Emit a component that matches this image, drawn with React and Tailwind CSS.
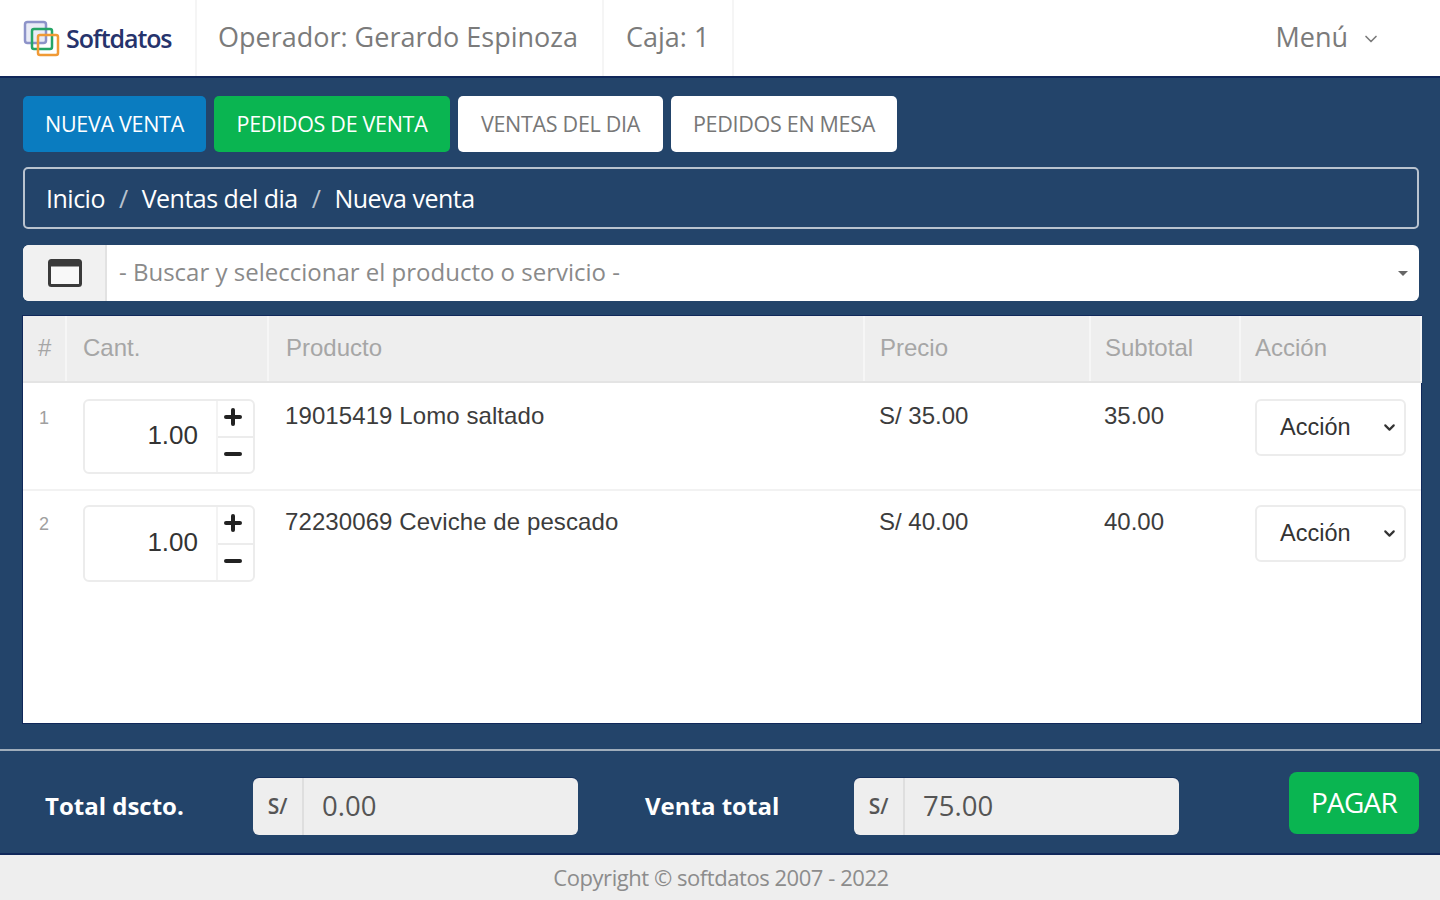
import React from "react";
import { ChevronDown, Plus, Minus } from "lucide-react";

const open = "font-['Open_Sans',sans-serif]";
const arial = "font-['Liberation_Sans',Arial,sans-serif]";

function Logo() {
  return (
    <svg width="38" height="38" viewBox="0 0 38 38" fill="none" className="shrink-0">
      <rect x="2" y="2" width="21" height="21" rx="2.5" stroke="#8d93c9" strokeWidth="2.5" fill="#e9ebf6" />
      <rect x="9" y="9" width="20" height="20" rx="2" stroke="#25a566" strokeWidth="2.5" />
      <rect x="15" y="15" width="20" height="20" rx="2" stroke="#f09a35" strokeWidth="2.5" />
    </svg>
  );
}

function WindowIcon() {
  return (
    <svg width="34" height="28" viewBox="0 0 34 28">
      <rect x="1.5" y="1.5" width="31" height="25" rx="2" fill="#f8f8f8" stroke="#3a3a3a" strokeWidth="3" />
      <rect x="1.5" y="1.5" width="31" height="6" fill="#3a3a3a" />
    </svg>
  );
}

function Tab({ children, className }) {
  return (
    <button className={`h-[56px] rounded-[5px] text-[21.5px] tracking-[-0.3px] flex items-center justify-center ${open} ${className}`}>
      {children}
    </button>
  );
}

function Th({ children, className = "" }) {
  return (
    <th className={`h-[66px] pb-[1px] bg-[#eeeeee] border-b-2 border-r-2 border-[#e4e4e4] border-r-[#f6f6f6] text-left align-middle font-normal text-[24px] text-[#a6a6a6] ${className}`}>
      {children}
    </th>
  );
}

function Stepper({ className = "" }) {
  return (
    <div className={`w-[172px] rounded-[6px] border-2 border-[#ececec] flex ${className}`}>
      <div className="flex-1 flex items-center justify-end pr-[18px] pb-[2px] text-[26px] text-[#333333]">1.00</div>
      <div className="w-[37px] border-l-2 border-[#f3f3f3] flex flex-col">
        <div className="flex-1 flex items-center justify-center pr-[5px] pb-[4px] border-b-2 border-[#ececec]">
          <Plus size={24} strokeWidth={4} color="#222222" />
        </div>
        <div className="flex-1 flex items-center justify-center pr-[5px] pb-[3px]">
          <Minus size={24} strokeWidth={4} color="#222222" />
        </div>
      </div>
    </div>
  );
}

function Row({ n, code, price, sub, h, stepper, border, topN, topT, topC }) {
  return (
    <tr className={`${h} align-top ${border ? "border-b-2 border-[#f2f2f2]" : ""}`}>
      <td className={`pl-[16px] ${topN} text-[18px] text-[#a0a0a0]`}>{n}</td>
      <td className={`pl-[17px] ${topC}`}>
        <Stepper className={stepper} />
      </td>
      <td className={`pl-[17px] ${topT} text-[24px] tracking-[0.09px] text-[#3c3c3c]`}>{code}</td>
      <td className={`pl-[15px] ${topT} text-[24px] text-[#3c3c3c]`}>{price}</td>
      <td className={`pl-[14px] ${topT} text-[24px] text-[#3c3c3c]`}>{sub}</td>
      <td className={`pl-[15px] ${topC}`}>
        <div className="h-[57px] w-[151px] rounded-[6px] border-2 border-[#ececec] bg-white pl-[23px] pr-[6px] flex items-center justify-between text-[23.5px] text-[#333333]">
          <span>Acción</span>
          <ChevronDown size={17} strokeWidth={3} color="#333333" />
        </div>
      </td>
    </tr>
  );
}

function Amount({ value }) {
  return (
    <div className={`w-[325px] h-[57px] rounded-[6px] bg-[#eeeeee] flex items-center shadow-[0_-1px_0_#15305c] ${open}`}>
      <div className="w-[51px] h-full border-r-2 border-[#dedede] flex items-center justify-center text-[21px] font-semibold text-[#555555]">S/</div>
      <div className="pl-[18px] text-[27.5px] text-[#555555] pb-[1px]">{value}</div>
    </div>
  );
}

export default function App() {
  return (
    <div className={`h-[900px] w-[1440px] overflow-hidden flex flex-col bg-[#eeeeee] ${open}`}>
      <header className="h-[78px] shrink-0 bg-white border-b-2 border-[#10285a] flex items-stretch text-[#7b7b7b]">
        <div className="w-[197px] border-r-2 border-[#f5f5f5] flex items-center pl-[23px] gap-[6px] pt-[2px]">
          <Logo />
          <span className="text-[25px] font-semibold tracking-[-1.1px] text-[#26336c] -ml-[1px]">Softdatos</span>
        </div>
        <div className="w-[407px] border-r-2 border-[#f5f5f5] flex items-center pl-[21px] pb-[1px] text-[27px] whitespace-nowrap">
          Operador: Gerardo Espinoza
        </div>
        <div className="w-[130px] border-r-2 border-[#f5f5f5] flex items-center pl-[22px] pb-[1px] text-[27px]">Caja: 1</div>
        <div className="flex-1 flex items-center justify-end pr-[59px] pb-[1px] text-[27px]">
          Menú
          <ChevronDown size={20} strokeWidth={2} className="ml-[13px] mt-[3px]" />
        </div>
      </header>

      <main className="h-[775px] shrink-0 bg-[#23446a] flex flex-col">
        <div className="px-[23px] pt-[18px] flex flex-col">
          <div className="flex gap-[8px]">
            <Tab className="w-[183px] bg-[#0a7cc0] text-white">NUEVA VENTA</Tab>
            <Tab className="w-[236px] bg-[#0ab551] text-white">PEDIDOS DE VENTA</Tab>
            <Tab className="w-[205px] bg-white text-[#777777]">VENTAS DEL DIA</Tab>
            <Tab className="w-[226px] bg-white text-[#777777]">PEDIDOS EN MESA</Tab>
          </div>

          <nav className="mt-[15px] h-[62px] w-[1396px] rounded-[5px] border-2 border-[#b9c3cf] flex items-center pl-[21px] pt-[1px] text-[25px] tracking-[-0.5px] text-white">
            <span>Inicio</span>
            <span className="mx-[14px] text-[#b8c2ce]">/</span>
            <span>Ventas del dia</span>
            <span className="mx-[14px] text-[#b8c2ce]">/</span>
            <span>Nueva venta</span>
          </nav>

          <div className="mt-[16px] h-[56px] w-[1396px] rounded-[6px] bg-white flex items-stretch overflow-hidden">
            <div className="w-[84px] bg-[#f1f1f1] border-r-2 border-[#e2e2e2] flex items-center justify-center pl-[1px] pb-[1px]">
              <WindowIcon />
            </div>
            <div className="flex-1 flex items-center pl-[12px] pr-[11px] pb-[3px] text-[24px] text-[#8a8a8a]">
              <span className="flex-1">- Buscar y seleccionar el producto o servicio -</span>
              <span className="w-0 h-0 mt-[3px] border-x-[5px] border-x-transparent border-t-[5px] border-t-[#666666]" />
            </div>
          </div>

          <div className={`mt-[15px] h-[407px] w-[1398px] bg-white shadow-[0_0_0_1px_#10285a] ${arial}`}>
            <table className="w-full table-fixed border-collapse">
              <colgroup>
                <col className="w-[43px]" />
                <col className="w-[202px]" />
                <col className="w-[596px]" />
                <col className="w-[226px]" />
                <col className="w-[150px]" />
                <col className="w-[181px]" />
              </colgroup>
              <thead>
                <tr>
                  <Th className="pl-[15px]">#</Th>
                  <Th className="pl-[16px]">Cant.</Th>
                  <Th className="pl-[17px]">Producto</Th>
                  <Th className="pl-[15px]">Precio</Th>
                  <Th className="pl-[14px]">Subtotal</Th>
                  <Th className="pl-[14px] border-r-0">Acción</Th>
                </tr>
              </thead>
              <tbody>
                <Row n="1" code="19015419 Lomo saltado" price="S/ 35.00" sub="35.00" h="h-[108px]" stepper="h-[75px]" border topN="pt-[22px]" topT="pt-[15px]" topC="pt-[16px]" />
                <Row n="2" code="72230069 Ceviche de pescado" price="S/ 40.00" sub="40.00" h="h-[107px]" stepper="h-[77px]" topN="pt-[20px]" topT="pt-[13px]" topC="pt-[14px]" />
              </tbody>
            </table>
          </div>
        </div>

        <div className="mt-[26px] border-t-2 border-[#9fadbb] flex items-start">
          <div className="w-[253px] pl-[45px] pt-[39px] text-[24px] leading-[32px] font-bold text-white">Total dscto.</div>
          <div className="pt-[27px]"><Amount value="0.00" /></div>
          <div className="w-[276px] pl-[67px] pt-[39px] text-[24px] leading-[32px] font-bold text-white">Venta total</div>
          <div className="pt-[27px]"><Amount value="75.00" /></div>
          <div className="pl-[110px] pt-[21px]">
            <button className="h-[62px] w-[130px] rounded-[8px] bg-[#0ab551] text-white text-[28px] tracking-[-0.8px] pb-[2px]">PAGAR</button>
          </div>
        </div>
      </main>

      <footer className="flex-1 border-t-2 border-[#10285a] pt-[6px] pl-[2px] text-center text-[22px] tracking-[-0.45px] text-[#8c8c8c]">
        Copyright © softdatos 2007 - 2022
      </footer>
    </div>
  );
}
